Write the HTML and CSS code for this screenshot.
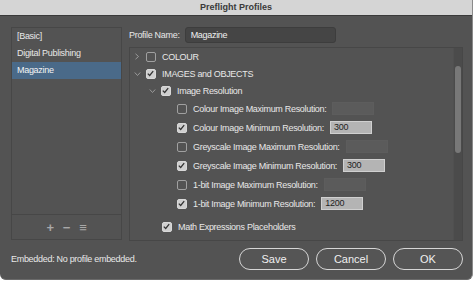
FILE: index.html
```html
<!DOCTYPE html>
<html lang="en">
<head>
    <meta charset="UTF-8">
    <title>Preflight Profiles</title>
    <link rel="stylesheet" href="styles.css">
</head>
<body>
    <div class="window">
        <div class="titlebar">Preflight Profiles</div>

        <div class="main">
            <div class="profiles">
                <div class="profile-list">
                    <div class="profile">[Basic]</div>
                    <div class="profile">Digital Publishing</div>
                    <div class="profile selected">Magazine</div>
                </div>
                <div class="profile-tools">
                    <span class="tool">+</span>
                    <span class="tool">&minus;</span>
                    <span class="tool">&equiv;</span>
                </div>
            </div>

            <div class="editor">
                <div class="name-row">
                    <label>Profile Name:</label>
                    <div class="name-input">Magazine</div>
                </div>

                <div class="tree">
                    <div class="tree-rows">
                        <div class="row lvl1">
                            <span class="chev"><svg width="6" height="7" viewBox="0 0 6 7"><path d="M1.5 0.8 L4.5 3.5 L1.5 6.2" fill="none" stroke="#9a9a9a" stroke-width="1"/></svg></span>
                            <span class="cb"></span>
                            <span class="txt">COLOUR</span>
                        </div>
                        <div class="row lvl1">
                            <span class="chev"><svg width="7" height="6" viewBox="0 0 7 6"><path d="M0.8 1.5 L3.5 4.5 L6.2 1.5" fill="none" stroke="#9a9a9a" stroke-width="1"/></svg></span>
                            <span class="cb on"><svg width="9" height="9" viewBox="0 0 9 9"><path d="M1.8 4.6 L3.7 6.5 L7.2 2.2" fill="none" stroke="#333" stroke-width="1.3"/></svg></span>
                            <span class="txt">IMAGES and OBJECTS</span>
                        </div>
                        <div class="row lvl2">
                            <span class="chev"><svg width="7" height="6" viewBox="0 0 7 6"><path d="M0.8 1.5 L3.5 4.5 L6.2 1.5" fill="none" stroke="#9a9a9a" stroke-width="1"/></svg></span>
                            <span class="cb on"><svg width="9" height="9" viewBox="0 0 9 9"><path d="M1.8 4.6 L3.7 6.5 L7.2 2.2" fill="none" stroke="#333" stroke-width="1.3"/></svg></span>
                            <span class="txt">Image Resolution</span>
                        </div>
                        <div class="row lvl3 res">
                            <span class="cb"></span>
                            <span class="txt">Colour Image Maximum Resolution:</span>
                            <span class="field off"></span>
                        </div>
                        <div class="row lvl3 res">
                            <span class="cb on"><svg width="9" height="9" viewBox="0 0 9 9"><path d="M1.8 4.6 L3.7 6.5 L7.2 2.2" fill="none" stroke="#333" stroke-width="1.3"/></svg></span>
                            <span class="txt">Colour Image Minimum Resolution:</span>
                            <span class="field">300</span>
                        </div>
                        <div class="row lvl3 res">
                            <span class="cb"></span>
                            <span class="txt">Greyscale Image Maximum Resolution:</span>
                            <span class="field off"></span>
                        </div>
                        <div class="row lvl3 res">
                            <span class="cb on"><svg width="9" height="9" viewBox="0 0 9 9"><path d="M1.8 4.6 L3.7 6.5 L7.2 2.2" fill="none" stroke="#333" stroke-width="1.3"/></svg></span>
                            <span class="txt">Greyscale Image Minimum Resolution:</span>
                            <span class="field">300</span>
                        </div>
                        <div class="row lvl3 res">
                            <span class="cb"></span>
                            <span class="txt">1-bit Image Maximum Resolution:</span>
                            <span class="field off"></span>
                        </div>
                        <div class="row lvl3 res">
                            <span class="cb on"><svg width="9" height="9" viewBox="0 0 9 9"><path d="M1.8 4.6 L3.7 6.5 L7.2 2.2" fill="none" stroke="#333" stroke-width="1.3"/></svg></span>
                            <span class="txt">1-bit Image Minimum Resolution:</span>
                            <span class="field">1200</span>
                        </div>
                        <div class="row lvl2b math">
                            <span class="cb on"><svg width="9" height="9" viewBox="0 0 9 9"><path d="M1.8 4.6 L3.7 6.5 L7.2 2.2" fill="none" stroke="#333" stroke-width="1.3"/></svg></span>
                            <span class="txt">Math Expressions Placeholders</span>
                        </div>
                        <div class="row lvl2b">
                            <span class="cb on"></span>
                        </div>
                    </div>
                    <div class="scrollbar">
                        <div class="thumb"></div>
                    </div>
                </div>
            </div>
        </div>

        <div class="footer">
            <div class="embedded">Embedded: No profile embedded.</div>
            <div class="buttons">
                <button>Save</button>
                <button>Cancel</button>
                <button>OK</button>
            </div>
        </div>
    </div>
</body>
</html>
```

FILE: styles.css
```css
body {
    margin: 0;
    background-color: #ffffff;
    font-family: "Liberation Sans", Arial, sans-serif;
    font-size: 9px;
    letter-spacing: -0.3px;
    color: #e8e8e8;
}
.window {
    width: 472px;
    height: 279px;
    background-color: #535353;
    border-right: 1px solid #8a8a8a;
    border-bottom: 1px solid #6a6a6a;
    border-radius: 0 0 6px 6px;
    display: flex;
    flex-direction: column;
    overflow: hidden;
}
.titlebar {
    height: 15px;
    line-height: 15px;
    background-color: #d5d5d5;
    border-bottom: 1px solid #3a3a3a;
    text-align: center;
    font-weight: bold;
    color: #3a3a3a;
    letter-spacing: 0;
}
.main {
    display: flex;
    gap: 7px;
    padding: 11px 9px 0 11px;
}
.profiles {
    width: 109px;
    height: 211px;
    border: 1px solid #474747;
    display: flex;
    flex-direction: column;
}
.profile-list {
    flex: 1;
    border-bottom: 1px solid #474747;
}
.profile {
    height: 17px;
    line-height: 17px;
    padding-left: 5px;
    color: #e8e8e8;
}
.profile.selected {
    background-color: #4a6a89;
    color: #f4f4f4;
}
.profile-tools {
    height: 24px;
    display: flex;
    justify-content: center;
    align-items: center;
    gap: 9px;
    color: #a8a8a8;
    font-size: 13px;
    font-weight: bold;
}
.editor {
    flex: 1;
    display: flex;
    flex-direction: column;
}
.name-row {
    display: flex;
    align-items: center;
    height: 16px;
    margin-bottom: 4px;
}
.name-row label {
    white-space: nowrap;
    margin-right: 5px;
}
.name-input {
    width: 144px;
    height: 14px;
    line-height: 14px;
    padding-left: 5px;
    background-color: #454545;
    border: 1px solid #3d3d3d;
    border-radius: 3px;
    color: #f0f0f0;
}
.tree {
    height: 192px;
    border: 1px solid #474747;
    display: flex;
    overflow: hidden;
}
.tree-rows {
    flex: 1;
}
.row {
    display: flex;
    align-items: center;
    height: 17px;
}
.row.res {
    height: 19px;
}
.row.math {
    margin-top: 5px;
    height: 18px;
}
.lvl1 {
    padding-left: 4px;
}
.lvl2 {
    padding-left: 19px;
}
.lvl2b {
    padding-left: 32px;
}
.lvl3 {
    padding-left: 47px;
}
.chev {
    width: 12px;
    display: flex;
    align-items: center;
}
.cb {
    width: 8px;
    height: 8px;
    border: 1px solid #a0a0a0;
    border-radius: 2px;
    flex-shrink: 0;
    display: flex;
}
.cb.on {
    background-color: #cfcfcf;
    border-color: #d8d8d8;
}
.cb svg {
    margin: -1px;
}
.txt {
    margin-left: 6px;
    white-space: nowrap;
}
.field {
    margin-left: 6px;
    width: 37px;
    height: 11px;
    line-height: 11px;
    padding-left: 3px;
    background-color: #b4b4b4;
    border: 1px solid #d0d0d0;
    color: #1e1e1e;
}
.field.off {
    background-color: #5b5b5b;
    border-color: #5d5d5d;
}
.scrollbar {
    width: 8px;
    background-color: #4b4b4b;
    border-left: 1px solid #505050;
    position: relative;
}
.thumb {
    position: absolute;
    left: 1px;
    top: 18px;
    width: 6px;
    height: 87px;
    border-radius: 3px;
    background-color: #787878;
}
.footer {
    display: flex;
    align-items: center;
    padding: 7px 9px 0 11px;
}
.embedded {
    flex: 1;
    color: #e8e8e8;
}
.buttons {
    display: flex;
    gap: 7px;
}
button {
    width: 70px;
    height: 22px;
    background-color: #555555;
    border: 1.5px solid #d6d6d6;
    border-radius: 11px;
    color: #f0f0f0;
    font-family: "Liberation Sans", Arial, sans-serif;
    font-size: 11px;
    padding: 0;
}
```
